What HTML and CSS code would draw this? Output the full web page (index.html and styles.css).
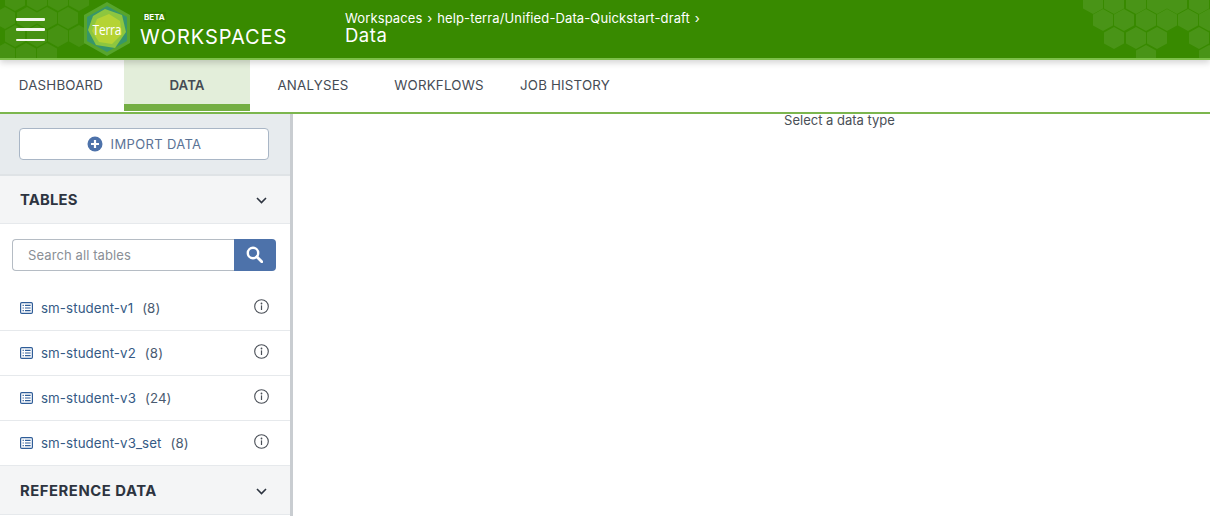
FILE: index.html
```html
<!DOCTYPE html>
<html lang="en">
<head>
<meta charset="utf-8">
<title>Terra Workspaces</title>
<link rel="stylesheet" href="styles.css">
</head>
<body>
<svg class="defs" width="0" height="0" aria-hidden="true">
  <defs>
    <polygon id="hex" points="0,-11 10,-5.5 10,5.5 0,11 -10,5.5 -10,-5.5"/>
    <g id="tableicon" fill="none" stroke="#2f5d98" stroke-width="1.2">
      <rect x="0.6" y="0.6" width="11.8" height="10.8" rx="1.2"/>
      <path d="M2.6 3.3h1.2M5 3.3h5.6M2.6 6h1.2M5 6h5.6M2.6 8.7h1.2M5 8.7h5.6"/>
    </g>
    <g id="infoicon">
      <circle cx="7.5" cy="7.5" r="6.8" fill="none" stroke="#4a4f57" stroke-width="1.1"/>
      <circle cx="7.5" cy="4.5" r="0.9" fill="#4a4f57"/>
      <rect x="6.9" y="6.4" width="1.2" height="4.6" fill="#4a4f57"/>
    </g>
    <path id="chev" d="M1 1l4.5 4.5L10 1" fill="none" stroke="#2d3440" stroke-width="1.6"/>
  </defs>
</svg>

<header class="topbar">
  <svg class="hexes hexes-left" width="110" height="58" viewBox="0 0 110 58" aria-hidden="true">
    <g fill="#fff" fill-opacity=".07">
      <use href="#hex" x="15" y="0"/><use href="#hex" x="37" y="0"/><use href="#hex" x="58" y="0"/><use href="#hex" x="79" y="0"/>
      <use href="#hex" x="5" y="18"/><use href="#hex" x="27" y="18"/><use href="#hex" x="47" y="18"/><use href="#hex" x="68" y="18"/>
      <use href="#hex" x="15" y="36"/><use href="#hex" x="37" y="36"/><use href="#hex" x="58" y="36"/><use href="#hex" x="79" y="36"/>
      <use href="#hex" x="5" y="54"/><use href="#hex" x="26" y="54"/><use href="#hex" x="47" y="54"/>
    </g>
  </svg>
  <svg class="hexes hexes-right" width="130" height="58" viewBox="1080 0 130 58" aria-hidden="true">
    <g fill="#fff" fill-opacity=".09">
      <use href="#hex" x="1093" y="3"/><use href="#hex" x="1114" y="3"/><use href="#hex" x="1136" y="3"/><use href="#hex" x="1157" y="3"/><use href="#hex" x="1177" y="3"/><use href="#hex" x="1199" y="3"/>
      <use href="#hex" x="1103" y="20"/><use href="#hex" x="1124" y="20"/><use href="#hex" x="1146" y="20"/><use href="#hex" x="1167" y="20"/><use href="#hex" x="1188" y="20"/><use href="#hex" x="1209" y="20"/>
      <use href="#hex" x="1114" y="38"/><use href="#hex" x="1136" y="38"/><use href="#hex" x="1157" y="38"/><use href="#hex" x="1199" y="38"/>
      <use href="#hex" x="1146" y="56"/><use href="#hex" x="1209" y="56"/>
    </g>
  </svg>

  <button class="menu" aria-label="Menu"><span></span><span></span><span></span></button>

  <div class="logo">
    <svg width="52" height="56" viewBox="-26 -28 52 56" aria-hidden="true">
      <polygon points="0,-27 23,-14 23,14 0,27 -23,14 -23,-14" fill="#57a52c"/>
      <polygon points="0,-23 20,-12 20,12 0,23 -20,12 -20,-12" fill="#37966a"/>
      <polygon points="-2,-20 15,-14 19,3 8,19 -11,16 -19,1 -14,-13" fill="#8dc63f"/>
      <polygon points="2,-15 13,-8 15,5 5,15 -8,13 -15,2 -10,-10" fill="#b5d334"/>
    </svg>
    <span class="logo-word">Terra</span>
  </div>

  <div class="brand">
    <span class="beta">BETA</span>
    <span class="brand-name">WORKSPACES</span>
  </div>

  <div class="crumbs">
    <div class="crumb-path">Workspaces <i>›</i> help-terra/Unified-Data-Quickstart-draft <i>›</i></div>
    <div class="crumb-title">Data</div>
  </div>
</header>

<nav class="tabs">
  <a class="tab">DASHBOARD</a>
  <a class="tab tab-active">DATA</a>
  <a class="tab">ANALYSES</a>
  <a class="tab">WORKFLOWS</a>
  <a class="tab">JOB HISTORY</a>
</nav>

<div class="body">
  <aside class="side">
    <div class="import-wrap">
      <button class="import">
        <svg width="16" height="16" viewBox="0 0 16 16" aria-hidden="true">
          <circle cx="8" cy="8" r="7.5" fill="#4d72aa"/>
          <path d="M8 4v8M4 8h8" stroke="#fff" stroke-width="2.2"/>
        </svg>
        IMPORT DATA
      </button>
    </div>

    <div class="section-head">
      <span>TABLES</span>
      <svg width="11" height="7" viewBox="0 0 11 7" aria-hidden="true"><use href="#chev"/></svg>
    </div>

    <div class="search">
      <div class="search-input">Search all tables</div>
      <button class="search-btn" aria-label="Search">
        <svg width="17" height="17" viewBox="0 0 17 17" aria-hidden="true">
          <circle cx="7" cy="7" r="5.2" fill="none" stroke="#fff" stroke-width="2.4"/>
          <path d="M10.8 10.8l5 5" stroke="#fff" stroke-width="2.8" stroke-linecap="round"/>
        </svg>
      </button>
    </div>

    <ul class="list">
      <li class="row">
        <svg class="row-icon" width="13" height="12" viewBox="0 0 13 12" aria-hidden="true"><use href="#tableicon"/></svg>
        <span class="row-name">sm-student-v1</span><span class="row-count">(8)</span>
        <svg class="row-info" width="15" height="15" viewBox="0 0 15 15" aria-hidden="true"><use href="#infoicon"/></svg>
      </li>
      <li class="row">
        <svg class="row-icon" width="13" height="12" viewBox="0 0 13 12" aria-hidden="true"><use href="#tableicon"/></svg>
        <span class="row-name">sm-student-v2</span><span class="row-count">(8)</span>
        <svg class="row-info" width="15" height="15" viewBox="0 0 15 15" aria-hidden="true"><use href="#infoicon"/></svg>
      </li>
      <li class="row">
        <svg class="row-icon" width="13" height="12" viewBox="0 0 13 12" aria-hidden="true"><use href="#tableicon"/></svg>
        <span class="row-name">sm-student-v3</span><span class="row-count">(24)</span>
        <svg class="row-info" width="15" height="15" viewBox="0 0 15 15" aria-hidden="true"><use href="#infoicon"/></svg>
      </li>
      <li class="row">
        <svg class="row-icon" width="13" height="12" viewBox="0 0 13 12" aria-hidden="true"><use href="#tableicon"/></svg>
        <span class="row-name">sm-student-v3_set</span><span class="row-count">(8)</span>
        <svg class="row-info" width="15" height="15" viewBox="0 0 15 15" aria-hidden="true"><use href="#infoicon"/></svg>
      </li>
    </ul>

    <div class="section-head section-ref">
      <span>REFERENCE DATA</span>
      <svg width="11" height="7" viewBox="0 0 11 7" aria-hidden="true"><use href="#chev"/></svg>
    </div>
  </aside>

  <main class="main">Select a data type</main>
</div>
</body>
</html>
```
FILE: styles.css
```css
* { box-sizing: border-box; }
html, body { height: 100%; }
body {
  margin: 0;
  height: 516px;
  overflow: hidden;
  background: #fff;
  color: #3f4650;
  font-family: Inter, "Open Sans", "Liberation Sans", sans-serif;
  display: flex;
  flex-direction: column;
}
.defs { position: absolute; }

.topbar {
  position: relative;
  z-index: 2;
  flex: none;
  height: 60px;
  background: #388a00;
  border-bottom: 2px solid #7cc04a;
  box-shadow: 0 3px 6px rgba(0, 0, 0, .16);
  display: flex;
  align-items: center;
  color: #fff;
}
.hexes { position: absolute; top: 0; }
.hexes-left { left: 0; }
.hexes-right { right: 0; }

.menu {
  position: relative;
  flex: none;
  width: 29px;
  height: 23px;
  margin: 1px 0 0 16px;
  padding: 0;
  border: 0;
  background: none;
  display: flex;
  flex-direction: column;
  justify-content: space-between;
}
.menu span { display: block; height: 2.5px; background: #f4f8ee; border-radius: 1px; }

.logo {
  position: relative;
  flex: none;
  width: 52px;
  height: 56px;
  margin-left: 36px;
  display: flex;
  align-items: center;
  justify-content: center;
}
.logo svg { position: absolute; inset: 0; }
.logo-word {
  position: relative;
  font-family: "Open Sans", sans-serif;
  font-size: 15px;
  color: #fff;
  letter-spacing: -.3px;
  transform: scaleX(.8);
}

.brand {
  flex: none;
  width: 205px;
  margin-left: 7px;
  padding-top: 3px;
  display: flex;
  flex-direction: column;
  align-items: flex-start;
}
.beta {
  margin-left: 3px;
  padding: 0 1px;
  font-size: 8px;
  font-weight: 700;
  line-height: 10px;
  background: rgba(0, 0, 0, .07);
}
.brand-name {
  margin-top: 3px;
  font-size: 20px;
  line-height: 24px;
  font-weight: 400;
  letter-spacing: .95px;
}

.crumbs { flex: none; margin-bottom: 4px; }
.crumb-path { font-size: 13px; line-height: 16px; letter-spacing: .12px; }
.crumb-path i { font-style: normal; margin: 0 1px; }
.crumb-title { font-size: 18.5px; line-height: 18px; font-weight: 400; letter-spacing: .5px; }

.tabs {
  flex: none;
  height: 54px;
  display: flex;
  margin-left: -2px;
  border-bottom: 2px solid #7cb64e;
  background: #fff;
}
.tab {
  width: 126px;
  padding-bottom: 2px;
  display: flex;
  align-items: center;
  justify-content: center;
  font-size: 13.3px;
  letter-spacing: .2px;
  color: #454b54;
}
.tab-active {
  background: #e3eeda;
  border-bottom: 7px solid #74ae43;
  margin-bottom: 1px;
  font-weight: 600;
  padding: 6px 0 0;
  letter-spacing: 0;
}

.body { flex: 1; min-height: 0; display: flex; }
.side {
  flex: none;
  width: 293px;
  border-right: 3px solid #c9cdd1;
  background: #fff;
}
.import-wrap {
  height: 62px;
  padding: 14px 21px 0 19px;
  background: #e7ebee;
  border-bottom: 2px solid #dfe3e6;
}
.import {
  width: 250px;
  height: 32px;
  display: flex;
  align-items: center;
  justify-content: center;
  gap: 8px;
  background: #fff;
  border: 1px solid #a9b6c6;
  border-radius: 4px;
  color: #5b7396;
  font: 400 13px Inter, sans-serif;
  letter-spacing: .35px;
}
.section-head {
  height: 48px;
  padding: 1px 23px 0 20px;
  display: flex;
  align-items: center;
  justify-content: space-between;
  background: #f4f5f6;
  border-bottom: 1px solid #e6e9ec;
  color: #2d3440;
  font-size: 14.8px;
  font-weight: 700;
  letter-spacing: .2px;
}
.search {
  display: flex;
  height: 32px;
  margin: 15px 14px 15px 12px;
}
.search-input {
  flex: 1;
  display: flex;
  align-items: center;
  padding-left: 15px;
  border: 1px solid #b5bcc4;
  border-right: 0;
  border-radius: 4px 0 0 4px;
  color: #8a8f96;
  font-size: 13px;
  letter-spacing: .1px;
}
.search-btn {
  flex: none;
  width: 42px;
  padding: 0 2px 2px 0;
  border: 0;
  border-radius: 0 4px 4px 0;
  background: #4d72aa;
  display: flex;
  align-items: center;
  justify-content: center;
}
.list { list-style: none; margin: 0; padding: 0; }
.row {
  height: 45px;
  padding: 0 21px 0 20px;
  display: flex;
  align-items: center;
  border-bottom: 1px solid #e6e9ec;
  font-size: 13.3px;
  letter-spacing: .1px;
  color: #355a85;
}
.row-icon { flex: none; margin-right: 8px; }
.row-name { margin-right: 9px; }
.row-count { color: #4a5a70; }
.row-info { margin-left: auto; margin-top: -3px; }
.section-ref { height: 49px; padding-top: 2px; letter-spacing: .55px; }

.main {
  flex: 1;
  padding: 0 0 0 176px;
  text-align: center;
  font-size: 13px;
  line-height: 12px;
  color: #4a4f57;
}
```
